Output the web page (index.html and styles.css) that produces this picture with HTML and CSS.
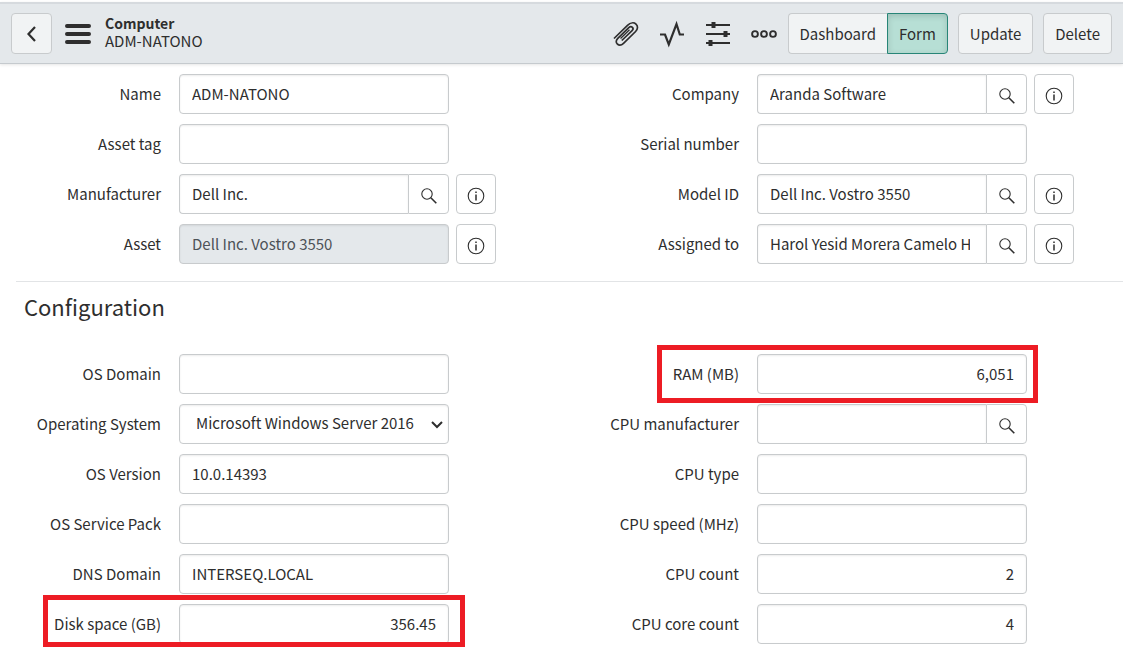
FILE: index.html
```html
<!DOCTYPE html>
<html lang="en">
<head>
<meta charset="utf-8">
<meta name="viewport" content="width=device-width, initial-scale=1">
<title>Computer ADM-NATONO</title>
<link rel="stylesheet" href="styles.css">
</head>
<body>
<svg class="symbols" aria-hidden="true">
  <symbol id="search" viewBox="0 0 18 18"><circle cx="7" cy="7" r="5.2"/><path d="M10.800 10.800 16.300 16.300" stroke-width="1.600"/></symbol>
  <symbol id="info" viewBox="0 0 18 18"><circle cx="9" cy="9" r="7.800"/><path d="M9 7.500v6M9 4.500v1.600" stroke-width="1.500"/></symbol>
</svg>
<header class="toolbar">
  <button class="btn back" type="button" aria-label="Back"><svg width="12" height="18" viewBox="0 0 12 18"><path d="M9 2 2.500 9 9 16" stroke-width="2.200"/></svg></button>
  <button class="tool menu" type="button" aria-label="Menu"><svg width="26" height="20" viewBox="0 0 26 20"><path d="M2 2h22M2 10h22M2 18h22" stroke-width="4" stroke-linecap="round"/></svg></button>
  <h1 class="title"><span class="title-type">Computer</span><span class="title-name">ADM-NATONO</span></h1>
  <div class="tools">
    <button class="tool" type="button" aria-label="Attachments"><svg width="28" height="28" viewBox="0 0 28 28"><path d="M2 18.500 15.500 5.300c3-2.800 6.500-3 8.500-1.100 2.200 2.100 1.900 5-.4 7.300L11.500 23.300c-2 2-4.500 2.200-6.200.7-1.600-1.500-1.400-3.700.5-5.600L16.800 7.700c1.200-1.200 2.700-1.300 3.600-.4.900.9.800 2.200-.3 3.300L9.800 20.500" stroke-width="1.700"/><path d="M8.500 18.500 17.500 9.800" stroke-width="1.300"/></svg></button>
    <button class="tool" type="button" aria-label="Activity"><svg width="28" height="28" viewBox="0 0 28 28"><path d="M2 14.500h5l3.800 10L18.500 4l3.300 10.500H26" stroke-width="2.200"/></svg></button>
    <button class="tool" type="button" aria-label="Personalize form"><svg width="28" height="28" viewBox="0 0 28 28"><path d="M2 5h24M2 14h24M2 23h24" stroke-width="2"/><path d="M9.500 2v6M21.500 11v6M6.500 20v6" stroke-width="4"/></svg></button>
    <button class="tool" type="button" aria-label="More options"><svg width="28" height="28" viewBox="0 0 28 28"><g stroke-width="1.900"><circle cx="5" cy="14" r="2.900"/><circle cx="14" cy="14" r="2.900"/><circle cx="23" cy="14" r="2.900"/></g></svg></button>
  </div>
  <div class="actions">
    <div class="switch"><button class="btn" type="button">Dashboard</button><button class="btn active" type="button" aria-pressed="true">Form</button></div>
    <button class="btn" type="button">Update</button>
    <button class="btn" type="button">Delete</button>
  </div>
</header>
<main>
  <section class="fields">
    <div class="column">
      <div class="row"><label for="name">Name</label><input class="control" id="name" value="ADM-NATONO"></div>
      <div class="row"><label for="tag">Asset tag</label><input class="control" id="tag"></div>
      <div class="row"><label for="maker">Manufacturer</label><div class="lookup"><input class="control" id="maker" value="Dell Inc."><button class="icon-btn" type="button" aria-label="Look up manufacturer"><svg><use href="#search"/></svg></button></div><button class="icon-btn" type="button" aria-label="Manufacturer details"><svg><use href="#info"/></svg></button></div>
      <div class="row"><label for="asset">Asset</label><input class="control readonly" id="asset" value="Dell Inc. Vostro 3550" readonly><button class="icon-btn" type="button" aria-label="Asset details"><svg><use href="#info"/></svg></button></div>
    </div>
    <div class="column">
      <div class="row"><label for="company">Company</label><div class="lookup"><input class="control" id="company" value="Aranda Software"><button class="icon-btn" type="button" aria-label="Look up company"><svg><use href="#search"/></svg></button></div><button class="icon-btn" type="button" aria-label="Company details"><svg><use href="#info"/></svg></button></div>
      <div class="row"><label for="serial">Serial number</label><input class="control" id="serial"></div>
      <div class="row"><label for="model">Model ID</label><div class="lookup"><input class="control" id="model" value="Dell Inc. Vostro 3550"><button class="icon-btn" type="button" aria-label="Look up model"><svg><use href="#search"/></svg></button></div><button class="icon-btn" type="button" aria-label="Model details"><svg><use href="#info"/></svg></button></div>
      <div class="row"><label for="assigned">Assigned to</label><div class="lookup"><input class="control" id="assigned" value="Harol Yesid Morera Camelo Harol"><button class="icon-btn" type="button" aria-label="Look up user"><svg><use href="#search"/></svg></button></div><button class="icon-btn" type="button" aria-label="User details"><svg><use href="#info"/></svg></button></div>
    </div>
  </section>
  <h2 class="section-title">Configuration</h2>
  <section class="fields">
    <div class="column">
      <div class="row"><label for="domain">OS Domain</label><input class="control" id="domain"></div>
      <div class="row"><label for="os">Operating System</label><div class="lookup dropdown"><select class="control" id="os"><option>Microsoft Windows Server 2016 Datacenter</option></select><svg class="chevron" viewBox="0 0 12 8"><path d="m1 1 5 5 5-5" stroke-width="2"/></svg></div></div>
      <div class="row"><label for="version">OS Version</label><input class="control" id="version" value="10.0.14393"></div>
      <div class="row"><label for="pack">OS Service Pack</label><input class="control" id="pack"></div>
      <div class="row"><label for="dns">DNS Domain</label><input class="control" id="dns" value="INTERSEQ.LOCAL"></div>
      <div class="row"><label for="disk">Disk space (GB)</label><input class="control number" id="disk" value="356.45"><span class="marker marker-disk"></span></div>
    </div>
    <div class="column">
      <div class="row"><label for="ram">RAM (MB)</label><input class="control number" id="ram" value="6,051"><span class="marker marker-ram"></span></div>
      <div class="row"><label for="cpu">CPU manufacturer</label><div class="lookup"><input class="control" id="cpu"><button class="icon-btn" type="button" aria-label="Look up CPU manufacturer"><svg><use href="#search"/></svg></button></div></div>
      <div class="row"><label for="cputype">CPU type</label><input class="control" id="cputype"></div>
      <div class="row"><label for="speed">CPU speed (MHz)</label><input class="control" id="speed"></div>
      <div class="row"><label for="count">CPU count</label><input class="control number" id="count" value="2"></div>
      <div class="row"><label for="cores">CPU core count</label><input class="control number" id="cores" value="4"></div>
    </div>
  </section>
</main>
</body>
</html>
```
FILE: styles.css
```css
* { box-sizing: border-box; }
body {
  margin: 0;
  padding: 2px 0 4px;
  background: #fff;
  color: #2e2e2e;
  font: 15px/20px "Noto Sans CJK SC", "Noto Sans", sans-serif;
}
button, input, select { margin: 0; font: inherit; color: inherit; }
svg { display: block; fill: none; stroke: currentColor; }
.symbols { position: absolute; width: 0; height: 0; }

.toolbar {
  display: flex;
  align-items: center;
  height: 62px;
  padding: 0 11px;
  background: #e4e8eb;
  border-top: 2px solid #d6dade;
  border-bottom: 1px solid #c5cace;
  box-shadow: 0 1px 3px #0000001a;
}
.btn {
  height: 41px;
  padding: 0 11px;
  background: #f1f3f4;
  border: 1px solid #c8cbcd;
  border-radius: 4px;
}
.back { display: grid; place-items: center; width: 41px; padding: 0; }
.tool { padding: 0; background: none; border: 0; }
.menu { margin-left: 13px; }
.title {
  display: flex;
  flex-direction: column;
  margin: 0 auto 0 14px;
  padding-bottom: 4px;
  font-size: 14px;
  font-weight: 400;
  line-height: 17px;
}
.title-type { font-weight: 700; }
.title-name { font-size: 15px; }
.tools { display: flex; gap: 18px; margin-right: 10px; }
.actions { display: flex; gap: 10px; }
.switch { display: flex; }
.switch .btn:first-child { border-right: 0; border-radius: 4px 0 0 4px; }
.switch .active {
  background: #b7dfd5;
  border-color: #278577;
  border-radius: 0 4px 4px 0;
  box-shadow: inset 0 2px 6px #00000026;
}

.fields {
  display: grid;
  grid-template-columns: minmax(0, 1fr) minmax(0, 1fr);
  gap: 82px;
  padding: 10px 49px 0 0;
}
.column { display: grid; gap: 10px; align-content: start; }
.row {
  position: relative;
  display: grid;
  grid-template-columns: 161px minmax(0, 1fr) 40px;
  column-gap: 7px;
  align-items: center;
}
.row label { text-align: right; white-space: nowrap; }
.row > .control, .lookup { margin-left: 11px; }
.control {
  min-width: 0;
  height: 40px;
  padding: 0 12px 2px;
  background: #fff;
  border: 1px solid #c8cbcd;
  border-radius: 4px;
  box-shadow: inset 0 1px 2px #00000014;
}
.readonly { background: #e4e8eb; color: #4d5257; }
.number { text-align: right; }
.lookup { display: flex; }
.lookup input {
  flex: 1;
  padding-right: 16px;
  border-right: 0;
  border-radius: 4px 0 0 4px;
}
.icon-btn {
  display: grid;
  place-items: center;
  width: 40px;
  height: 40px;
  padding: 4px 0 0;
  background: #fff;
  border: 1px solid #c8cbcd;
  border-radius: 4px;
}
.icon-btn svg { width: 18px; height: 18px; stroke-width: 1.1; }
.lookup .icon-btn { width: 41px; border-radius: 0 4px 4px 0; }
.dropdown { position: relative; }
.dropdown select {
  flex: 1;
  padding: 0 33px 2px 16px;
  appearance: none;
}
.chevron {
  position: absolute;
  top: 17px;
  right: 6px;
  width: 12px;
  height: 8px;
  pointer-events: none;
}

.section-title {
  margin: 17px 0 0 16px;
  padding: 9px 8px 23px;
  border-top: 1px solid #e2e4e6;
  font-size: 22px;
  font-weight: 400;
  line-height: 30px;
}
.marker {
  position: absolute;
  border: 5px solid #ed1c24;
  pointer-events: none;
}
.marker-disk { inset: -9px 31px -3px 43px; }
.marker-ram { inset: -9px 36px -9px 79px; }
```
